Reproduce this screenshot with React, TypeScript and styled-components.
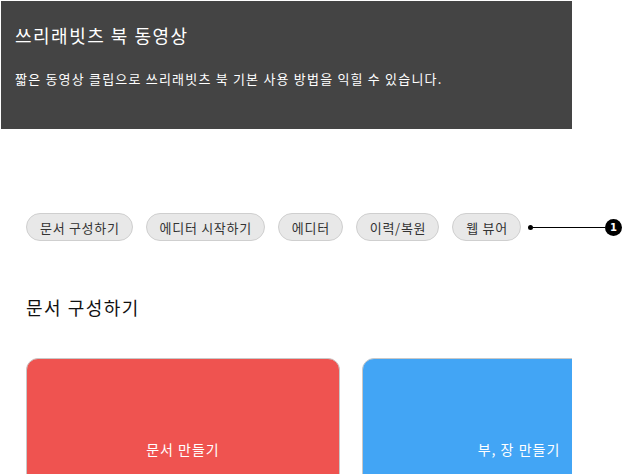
import React from 'react';
import styled, { createGlobalStyle } from 'styled-components';

const GlobalStyle = createGlobalStyle`
  html, body {
    margin: 0;
    padding: 0;
    background: #fff;
  }
  body {
    font-family: 'Noto Sans CJK KR', 'Noto Sans', sans-serif;
    color: #222;
  }
`;

const Page = styled.div`
  padding: 1px 0 0 1px;
  width: 571px;
`;

const Header = styled.header`
  background: #444444;
  color: #fff;
  height: 128px;
  box-sizing: border-box;
  padding: 20px 14px;
  h1 {
    margin: 0;
    font-size: 18px;
    font-weight: 400;
    line-height: 28px;
    letter-spacing: 1.5px;
  }
  p {
    margin: 20px 0 0;
    font-size: 13px;
    line-height: 20px;
    letter-spacing: 1.2px;
  }
`;

const TabBar = styled.nav`
  display: flex;
  align-items: center;
  gap: 13px;
  margin: 84px 0 0 25px;
  width: 596px;
`;

const Pill = styled.button`
  font-family: inherit;
  font-size: 13px;
  line-height: 17px;
  letter-spacing: 0.7px;
  color: #333;
  background: #e8e8e8;
  border: 1px solid #cfcfcf;
  border-radius: 14px;
  padding: 4px 12px 4px 13px;
  height: 28px;
  white-space: nowrap;
  cursor: pointer;
`;

const Callout = styled.div`
  display: flex;
  align-items: center;
  margin-left: -6px;
  flex: 1;
`;

const Dot = styled.span`
  width: 5px;
  height: 5px;
  border-radius: 50%;
  background: #000;
`;

const Line = styled.span`
  flex: 1;
  height: 1px;
  background: #000;
`;

const Badge = styled.span`
  width: 17px;
  height: 17px;
  border-radius: 50%;
  background: #000;
  color: #fff;
  font-family: 'DejaVu Sans', sans-serif;
  font-weight: 700;
  font-size: 10px;
  display: flex;
  align-items: center;
  justify-content: center;
`;

const SectionTitle = styled.h2`
  margin: 53px 0 0 25px;
  font-size: 18px;
  font-weight: 400;
  line-height: 26px;
  letter-spacing: 1.5px;
  color: #111;
`;

const CardRow = styled.div`
  display: flex;
  gap: 22px;
  margin: 38px 0 0 25px;
  width: 546px;
  overflow: hidden;
`;

const Card = styled.div<{ $color: string }>`
  flex: 0 0 314px;
  height: 200px;
  box-sizing: border-box;
  background: ${p => p.$color};
  border: 1px solid #c8c8c8;
  border-radius: 12px;
  color: #fff;
  font-size: 14px;
  letter-spacing: 1px;
  text-align: center;
  padding-top: 80px;
`;

const tabs = ['문서 구성하기', '에디터 시작하기', '에디터', '이력/복원', '웹 뷰어'];

const cards = [
  { title: '문서 만들기', color: '#ef5350' },
  { title: '부, 장 만들기', color: '#42a5f5' },
];

const App = () => {
  return (
    <Page>
      <GlobalStyle />
      <Header>
        <h1>쓰리래빗츠 북 동영상</h1>
        <p>짧은 동영상 클립으로 쓰리래빗츠 북 기본 사용 방법을 익힐 수 있습니다.</p>
      </Header>
      <TabBar>
        {tabs.map(t => (
          <Pill key={t}>{t}</Pill>
        ))}
        <Callout>
          <Dot />
          <Line />
          <Badge>1</Badge>
        </Callout>
      </TabBar>
      <SectionTitle>문서 구성하기</SectionTitle>
      <CardRow>
        {cards.map(c => (
          <Card key={c.title} $color={c.color}>
            {c.title}
          </Card>
        ))}
      </CardRow>
    </Page>
  );
};

export default App;
